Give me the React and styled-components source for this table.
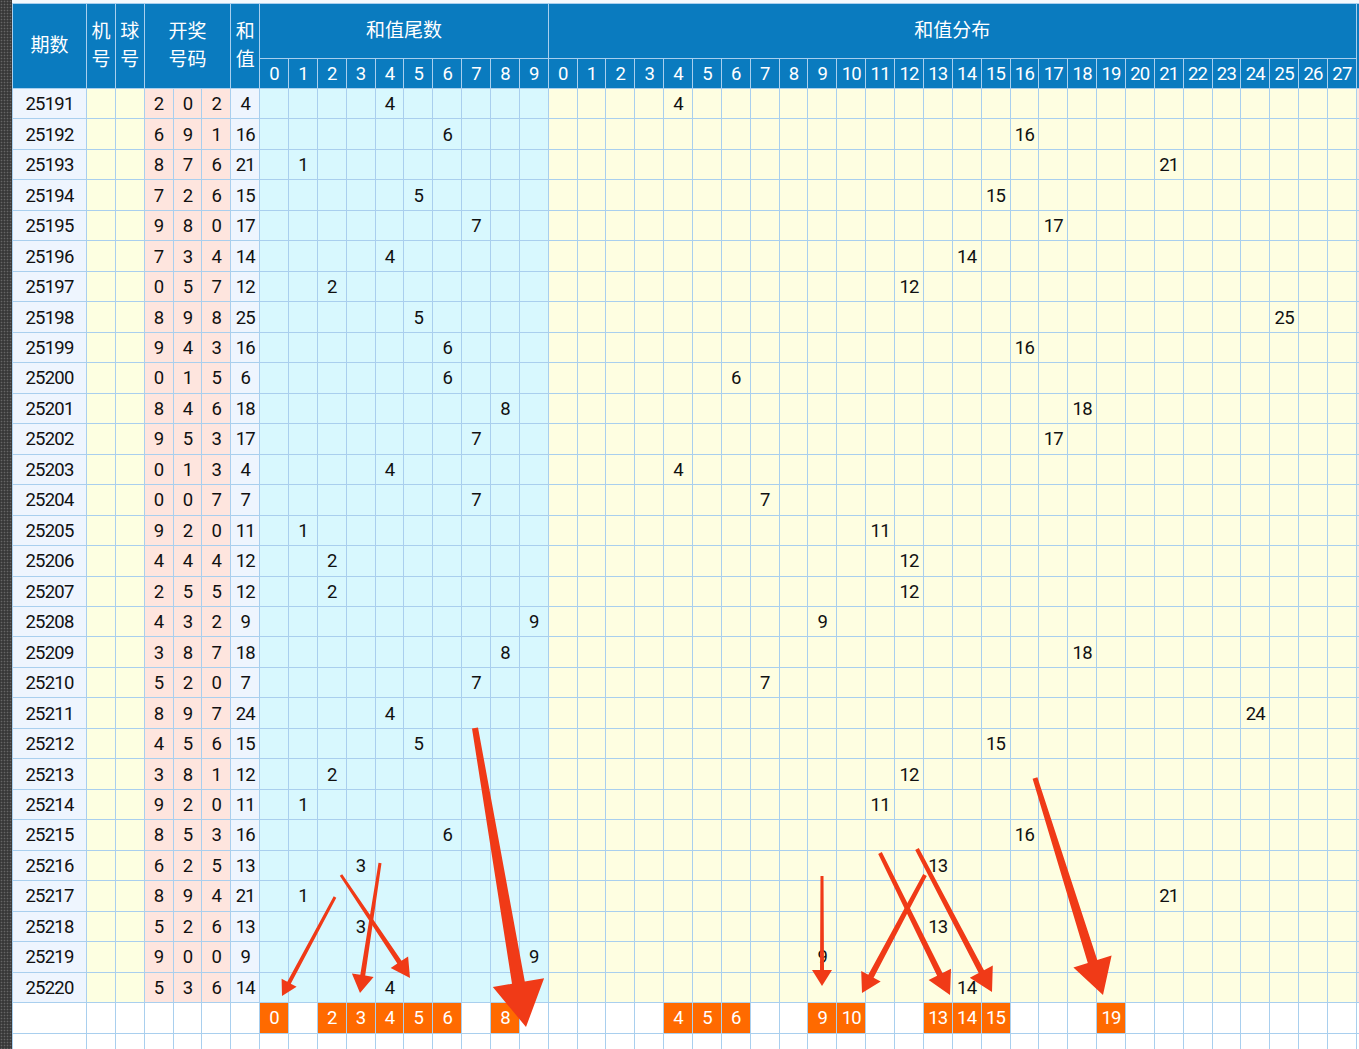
import React from "react";
import styled, { createGlobalStyle } from "styled-components";

const Global = createGlobalStyle`
  html, body { margin: 0; padding: 0; overflow: hidden; background: #fff; }
  body { font-family: Roboto, "Noto Sans CJK SC", sans-serif; }
`;

const BORDER = "#a9cfee";
const PITCH = 28.86;
const CELL = PITCH - 1;

const Page = styled.div`
  position: relative;
  display: flex;
  width: 1359px;
  height: 1049px;
  overflow: hidden;
`;

const Strip = styled.div`
  flex: 0 0 12px;
  background: radial-gradient(circle, #666 0.7px, transparent 1.1px) 0 0 / 3px 3px, #383838;
`;

const Board = styled.div`
  flex: 1;
  overflow: hidden;
  padding-top: 3px;
  background: #f4f9fd;
`;

const Grid = styled.div`
  display: grid;
  width: max-content;
  grid-template-columns: 73px repeat(46, ${CELL}px);
  grid-template-rows: 54px 29px repeat(33, 29.47px);
  gap: 1px;
  padding: 1px;
  background: ${BORDER};
`;

const Head = styled.div`
  background: #0a7bbf;
  color: #fff;
  font-size: ${(p) => (p.$num ? "18.5px" : "19px")};
  letter-spacing: ${(p) => (p.$num ? "-0.8px" : "0")};
  line-height: 28px;
  padding-top: ${(p) => (p.$num ? "1px" : "0")};
  display: flex;
  align-items: center;
  justify-content: center;
  text-align: center;
  grid-column: ${(p) => p.$col || "auto"};
  grid-row: ${(p) => p.$row || "auto"};
  white-space: nowrap;
`;

const Cell = styled.div`
  background: ${(p) => p.$bg};
  color: ${(p) => p.$fg || "#111"};
  font-size: 18.5px;
  letter-spacing: -0.8px;
  padding-top: 1px;
  display: flex;
  align-items: center;
  justify-content: center;
  white-space: nowrap;
`;

const ArrowLayer = styled.svg`
  position: absolute;
  left: 0;
  top: 0;
  pointer-events: none;
`;

const C = {
  issue: "#eef5fe",
  yellowish: "#fdffe1",
  pink: "#fee5de",
  tail: "#d8f8fe",
  dist: "#fefee1",
  white: "#ffffff",
  orange: "#ff6a00",
};

const data = [
  ["25191", [2, 0, 2]], ["25192", [6, 9, 1]], ["25193", [8, 7, 6]], ["25194", [7, 2, 6]],
  ["25195", [9, 8, 0]], ["25196", [7, 3, 4]], ["25197", [0, 5, 7]], ["25198", [8, 9, 8]],
  ["25199", [9, 4, 3]], ["25200", [0, 1, 5]], ["25201", [8, 4, 6]], ["25202", [9, 5, 3]],
  ["25203", [0, 1, 3]], ["25204", [0, 0, 7]], ["25205", [9, 2, 0]], ["25206", [4, 4, 4]],
  ["25207", [2, 5, 5]], ["25208", [4, 3, 2]], ["25209", [3, 8, 7]], ["25210", [5, 2, 0]],
  ["25211", [8, 9, 7]], ["25212", [4, 5, 6]], ["25213", [3, 8, 1]], ["25214", [9, 2, 0]],
  ["25215", [8, 5, 3]], ["25216", [6, 2, 5]], ["25217", [8, 9, 4]], ["25218", [5, 2, 6]],
  ["25219", [9, 0, 0]], ["25220", [5, 3, 6]],
];

const tailHot = [0, 2, 3, 4, 5, 6, 8];
const distHot = [4, 5, 6, 9, 10, 13, 14, 15, 19];
const range = (n) => Array.from({ length: n }, (_, i) => i);

function arrowPoints(s, t, w0, w1, L, H) {
  const dx = t[0] - s[0];
  const dy = t[1] - s[1];
  const len = Math.hypot(dx, dy);
  const ux = dx / len, uy = dy / len;
  const nx = -uy, ny = ux;
  const b = [t[0] - ux * L, t[1] - uy * L];
  const p = (x, y) => `${x.toFixed(1)},${y.toFixed(1)}`;
  return [
    p(s[0] + nx * w0 / 2, s[1] + ny * w0 / 2),
    p(b[0] + nx * w1 / 2, b[1] + ny * w1 / 2),
    p(b[0] + nx * H / 2, b[1] + ny * H / 2),
    p(t[0], t[1]),
    p(b[0] - nx * H / 2, b[1] - ny * H / 2),
    p(b[0] - nx * w1 / 2, b[1] - ny * w1 / 2),
    p(s[0] - nx * w0 / 2, s[1] - ny * w0 / 2),
  ].join(" ");
}

const arrows = [
  [[335, 897], [282, 996], 3, 4, 15, 17],
  [[380, 863], [360, 993], 3, 5, 18, 22],
  [[341, 875], [410, 978], 3, 5, 19, 21],
  [[475, 728], [526, 1027], 6, 13, 45, 52],
  [[822, 876], [822, 986], 3, 4, 16, 20],
  [[925, 875], [862, 993], 4, 6, 19, 22],
  [[880, 853], [950, 995], 4, 6, 23, 25],
  [[917, 849], [992, 992], 4, 6, 23, 26],
  [[1035, 778], [1103, 995], 5, 10, 35, 40],
];

export default function App() {
  const cells = [];
  cells.push(<Head key="h-issue" $col="1" $row="1 / 3">期数</Head>);
  cells.push(<Head key="h-ji" $col="2" $row="1 / 3">机<br />号</Head>);
  cells.push(<Head key="h-qiu" $col="3" $row="1 / 3">球<br />号</Head>);
  cells.push(<Head key="h-kj" $col="4 / 7" $row="1 / 3">开奖<br />号码</Head>);
  cells.push(<Head key="h-sum" $col="7" $row="1 / 3">和<br />值</Head>);
  cells.push(<Head key="h-tail" $col="8 / 18" $row="1">和值尾数</Head>);
  cells.push(<Head key="h-dist" $col="18 / 46" $row="1">和值分布</Head>);
  cells.push(<Head key="h-extra" $col="46 / 48" $row="1 / 3"></Head>);
  range(10).forEach((i) => cells.push(<Head key={`ht${i}`} $row="2" $num>{i}</Head>));
  range(28).forEach((i) => cells.push(<Head key={`hd${i}`} $row="2" $num>{i}</Head>));

  data.forEach(([issue, nums], r) => {
    const sum = nums[0] + nums[1] + nums[2];
    const tail = sum % 10;
    cells.push(<Cell key={`i${r}`} $bg={C.issue}>{issue}</Cell>);
    cells.push(<Cell key={`j${r}`} $bg={C.yellowish} />);
    cells.push(<Cell key={`q${r}`} $bg={C.yellowish} />);
    nums.forEach((n, k) => cells.push(<Cell key={`n${r}-${k}`} $bg={C.pink}>{n}</Cell>));
    cells.push(<Cell key={`s${r}`} $bg={C.issue}>{sum}</Cell>);
    range(10).forEach((i) =>
      cells.push(<Cell key={`t${r}-${i}`} $bg={C.tail}>{i === tail ? tail : ""}</Cell>)
    );
    range(28).forEach((i) =>
      cells.push(<Cell key={`d${r}-${i}`} $bg={C.dist}>{i === sum ? sum : ""}</Cell>)
    );
    cells.push(<Cell key={`x${r}-0`} $bg={C.pink} />);
    cells.push(<Cell key={`x${r}-1`} $bg={C.pink} />);
  });

  range(7).forEach((i) => cells.push(<Cell key={`sb${i}`} $bg={C.white} />));
  range(10).forEach((i) => {
    const hot = tailHot.includes(i);
    cells.push(
      <Cell key={`st${i}`} $bg={hot ? C.orange : C.white} $fg="#fff">{hot ? i : ""}</Cell>
    );
  });
  range(28).forEach((i) => {
    const hot = distHot.includes(i);
    cells.push(
      <Cell key={`sd${i}`} $bg={hot ? C.orange : C.white} $fg="#fff">{hot ? i : ""}</Cell>
    );
  });
  range(2).forEach((i) => cells.push(<Cell key={`sx${i}`} $bg={C.white} />));
  range(2).forEach((r) =>
    range(47).forEach((i) => cells.push(<Cell key={`b${r}-${i}`} $bg={C.white} />))
  );

  return (
    <>
      <Global />
      <Page>
        <Strip />
        <Board>
          <Grid>{cells}</Grid>
        </Board>
        <ArrowLayer width="1359" height="1049" viewBox="0 0 1359 1049">
          {arrows.map((a, i) => (
            <polygon key={i} points={arrowPoints(...a)} fill="#f03a17" />
          ))}
        </ArrowLayer>
      </Page>
    </>
  );
}
